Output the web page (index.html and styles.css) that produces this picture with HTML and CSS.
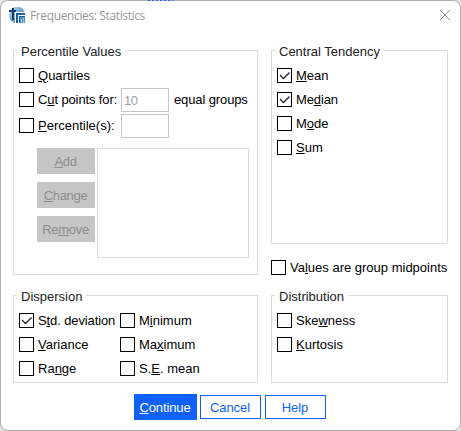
FILE: index.html
```html
<!DOCTYPE html>
<html lang="en">
<head>
<meta charset="utf-8">
<title>Frequencies: Statistics</title>
<link rel="stylesheet" href="styles.css">
</head>
<body>
<div class="backdrop"><i class="bg-text"></i></div>
<main class="dialog">
  <header class="titlebar">
    <svg class="logo" width="16" height="16" viewBox="0 0 16 16">
      <defs><linearGradient id="sky" x1="0" y1="0" x2="1" y2="1"><stop offset="0" stop-color="#d5e5f0"/><stop offset=".4" stop-color="#78aed5"/><stop offset="1" stop-color="#4388c3"/></linearGradient></defs>
      <path d="M5 0h6l3 2 2 4v10H5l-4-3-1-5 1-4z" fill="url(#sky)"/>
      <path d="M6 5h10v11H6z" fill="#1f5c9c"/>
      <path d="M6 5.5h10M6.5 5v11M9.5 8v8M9 8.500h7" stroke="#fff" fill="none"/>
      <path d="M11 10h5v6h-5z" fill="#4b93d0"/>
      <path d="M12.500 12v4M14.500 11v5" stroke="#8cc4eb"/>
      <path d="M0 4h7M4 1v12" stroke="#123d75" stroke-width="2"/>
    </svg>
    <h1>Frequencies: Statistics</h1>
    <svg class="close" width="10" height="10" viewBox="0 0 10 10"><path d="M0 0l10 10M10 0L0 10"/></svg>
  </header>

  <div class="panels">
    <section class="group percentile">
      <h2>Percentile Values</h2>
      <label class="row"><i class="box"></i><span><u>Q</u>uartiles</span></label>
      <div class="row"><i class="box"></i><span class="field-label tight">C<u>u</u>t points for:</span><span class="field">10</span><span class="suffix tight">equal groups</span></div>
      <div class="row second"><i class="box"></i><span class="field-label"><u>P</u>ercentile(s):</span><span class="field"></span></div>
      <div class="editor">
        <div class="actions">
          <button disabled><u>A</u>dd</button>
          <button disabled><u>C</u>hange</button>
          <button disabled>Re<u>m</u>ove</button>
        </div>
        <div class="list"></div>
      </div>
    </section>

    <div class="side">
      <section class="group central">
        <h2>Central Tendency</h2>
        <label class="row"><i class="box"><svg viewBox="0 0 13 13"><path d="M2 6l3.500 3.500L11.500 3.500"/></svg></i><span><u>M</u>ean</span></label>
        <label class="row"><i class="box"><svg viewBox="0 0 13 13"><path d="M2 6l3.500 3.500L11.500 3.500"/></svg></i><span class="tight">Me<u>d</u>ian</span></label>
        <label class="row"><i class="box"></i><span>M<u>o</u>de</span></label>
        <label class="row"><i class="box"></i><span><u>S</u>um</span></label>
      </section>
      <label class="row"><i class="box"></i><span>Va<u>l</u>ues are group midpoints</span></label>
    </div>

    <section class="group dispersion">
      <h2>Dispersion</h2>
      <div class="columns">
        <div>
          <label class="row"><i class="box"><svg viewBox="0 0 13 13"><path d="M2 6l3.500 3.500L11.500 3.500"/></svg></i><span class="tight">S<u>t</u>d. deviation</span></label>
          <label class="row"><i class="box"></i><span><u>V</u>ariance</span></label>
          <label class="row"><i class="box"></i><span>Ra<u>n</u>ge</span></label>
        </div>
        <div>
          <label class="row"><i class="box"></i><span>M<u>i</u>nimum</span></label>
          <label class="row"><i class="box"></i><span>Ma<u>x</u>imum</span></label>
          <label class="row"><i class="box"></i><span>S.<u>E</u>. mean</span></label>
        </div>
      </div>
    </section>

    <section class="group distribution">
      <h2>Distribution</h2>
      <label class="row"><i class="box"></i><span>Ske<u>w</u>ness</span></label>
      <label class="row"><i class="box"></i><span><u>K</u>urtosis</span></label>
    </section>
  </div>

  <footer>
    <button class="primary"><u>C</u>ontinue</button>
    <button>Cancel</button>
    <button>Help</button>
  </footer>
</main>
</body>
</html>
```
FILE: styles.css
```css
* { box-sizing: border-box; }
body {
  margin: 0;
  width: 461px;
  height: 431px;
  overflow: hidden;
  position: relative;
  background: #e4e4e4;
  font: 13px/15px "Liberation Sans", Arial, sans-serif;
  color: #000;
}
.backdrop { position: absolute; inset: 0; }
.bg-text {
  position: absolute;
  z-index: 1;
  left: 148px;
  top: 0;
  width: 25px;
  height: 1px;
  background: repeating-linear-gradient(90deg, #3b5fd0 0 2px, #a9b4d8 2px 4px);
}
.dialog {
  width: 461px;
  height: 431px;
  border: 1px solid #adadad;
  border-radius: 8px;
  background: #fff;
  position: relative;
}
.titlebar {
  display: flex;
  height: 38px;
  padding: 6px 10px 0 8px;
}
.logo { flex: none; }
h1 {
  flex: 1;
  margin: 1px 0 0 5px;
  font: 12px/16px "Open Sans", "Noto Sans", sans-serif;
  letter-spacing: -0.37px;
  color: #999;
}
.close { margin-top: 3px; overflow: visible; }
.close path { stroke: #8b8b8b; fill: none; }
.panels {
  display: grid;
  grid-template-columns: 245px 177px;
  grid-template-rows: 225px 88px;
  gap: 20px 13px;
  padding: 11px 0 0 12px;
}
.group {
  border: 1px solid #dcdcdc;
  padding: 0 5px;
}
h2 {
  width: max-content;
  margin: -7px 0 9px -2px;
  padding: 0 4px;
  background: #fff;
  font: inherit;
  color: #222;
}
.row {
  display: flex;
  align-items: center;
  height: 15px;
  margin-bottom: 9px;
  white-space: nowrap;
}
.row.second { margin: 11px 0 15px; }
.box {
  flex: none;
  width: 15px;
  height: 15px;
  margin-right: 4px;
  border: 1px solid #000;
}
.box svg { display: block; width: 13px; height: 13px; }
.box path { fill: none; stroke: #222; stroke-width: 1.3; }
u { text-decoration: underline 1px; text-underline-offset: 1px; }
.tight { letter-spacing: -0.12px; }
.field-label { width: 83px; }
.field {
  flex: none;
  width: 48px;
  height: 24px;
  padding: 4px 2px;
  border: 1px solid #c6c6c6;
  color: #a0a0a0;
  letter-spacing: -0.5px;
}
.suffix { margin-left: 5px; }
.editor {
  display: flex;
  gap: 2px;
  padding-left: 18px;
}
.actions { display: grid; gap: 8px; align-content: start; }
button {
  padding: 0 1px 0 0;
  border: 1px solid #0f62fe;
  background: #fff;
  color: #0f62fe;
  font: inherit;
}
.actions button {
  width: 58px;
  height: 26px;
  border: 0;
  background: #c6c6c6;
  color: #8d8d8d;
  letter-spacing: -0.3px;
}
.list { width: 152px; height: 110px; border: 1px solid #dcdcdc; }
.central { height: 194px; margin-bottom: 16px; }
.columns { display: grid; grid-template-columns: 101px 1fr; }
footer {
  display: flex;
  align-items: center;
  gap: 4px;
  margin: 11px 0 0 133px;
}
footer button { width: 61px; height: 24px; letter-spacing: -0.1px; }
footer .primary { width: 63px; height: 26px; margin-right: -1px; background: #0f62fe; color: #fff; }
```
